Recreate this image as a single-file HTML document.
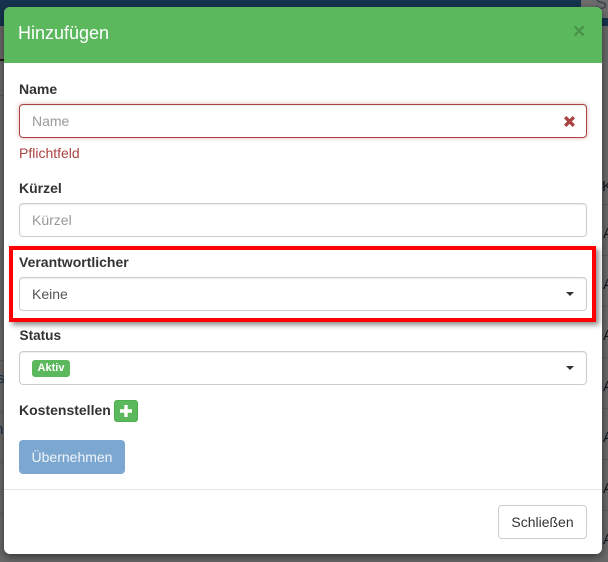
<!DOCTYPE html>
<html lang="de">
<head>
<meta charset="utf-8">
<title>Hinzufügen</title>
<style>
html,body{margin:0;padding:0}
body{width:608px;height:562px;overflow:hidden;position:relative;background:#6a6a6a;font-family:"Liberation Sans",sans-serif;font-size:14px;color:#333}
.a{position:absolute}
.line{position:absolute;height:1px;background:#5d5d5d}
.bgt{position:absolute;color:#10181f;font-size:15px;line-height:16px;white-space:nowrap}
.modal{position:absolute;left:4px;top:7px;width:598px;height:547px;background:#fff;border-radius:6px;box-shadow:0 3px 9px rgba(0,0,0,.5);overflow:hidden}
.head{position:absolute;left:0;top:0;width:598px;height:56px;background:#5cb85c}
.title{position:absolute;left:14px;top:15px;font-size:18px;line-height:23px;color:#fff}
.x{position:absolute;left:569px;top:14px;font-size:21px;line-height:21px;font-weight:bold;color:#000;opacity:.2}
label{position:absolute;font-weight:bold;font-size:14px;line-height:20px;color:#333;white-space:nowrap}
.in{position:absolute;left:19px;width:566px;height:32px;border:1px solid #ccc;border-radius:4px;background:#fff;line-height:32px;text-indent:12px;font-size:14px;color:#999;box-shadow:inset 0 1px 1px rgba(0,0,0,.075)}
.sel{color:#555}
.caret{position:absolute;left:566px;width:0;height:0;border-left:4px solid transparent;border-right:4px solid transparent;border-top:4px solid #333}
</style>
</head>
<body>
<div class="a" style="left:0;top:0;width:608px;height:26px;background:#16344f"></div>
<div class="a" style="left:581px;top:0;width:27px;height:18px;background:#6e6e6e"></div>
<div class="bgt" style="left:595px;top:-7px;font-size:18px;line-height:20px;color:#3c4650">Su</div>
<div class="a" style="left:0;top:26px;width:4px;height:536px;background:#6a6a6a"></div>
<div class="a" style="left:602px;top:26px;width:6px;height:536px;background:#6a6a6a"></div>
<div class="a" style="left:0;top:59px;width:4px;height:2px;background:#201a12"></div>
<div class="line" style="left:0;top:95px;width:4px"></div>
<div class="line" style="left:0;top:360px;width:4px"></div>
<div class="line" style="left:0;top:411px;width:4px"></div>
<div class="line" style="left:0;top:462px;width:4px"></div>
<div class="line" style="left:0;top:513px;width:4px"></div>
<div class="bgt" style="left:-6px;top:371px;color:#16344f">is</div>
<div class="bgt" style="left:-5px;top:422px;color:#16344f">n</div>
<div class="line" style="left:602px;top:204px;width:6px"></div>
<div class="line" style="left:602px;top:255px;width:6px"></div>
<div class="line" style="left:602px;top:306px;width:6px"></div>
<div class="line" style="left:602px;top:357px;width:6px"></div>
<div class="line" style="left:602px;top:408px;width:6px"></div>
<div class="line" style="left:602px;top:459px;width:6px"></div>
<div class="line" style="left:602px;top:510px;width:6px"></div>
<div class="bgt" style="left:602px;top:179px">K</div>
<div class="bgt" style="left:603px;top:226px">A</div>
<div class="bgt" style="left:603px;top:277px">A</div>
<div class="bgt" style="left:603px;top:328px">A</div>
<div class="bgt" style="left:603px;top:379px">A</div>
<div class="bgt" style="left:603px;top:430px">A</div>
<div class="bgt" style="left:603px;top:481px">A</div>
<div class="bgt" style="left:603px;top:532px">A</div>

<div class="modal">
  <div class="head">
    <div class="title">Hinzufügen</div>
    <div class="x">×</div>
  </div>
</div>

<label style="left:19px;top:79px">Name</label>
<div class="in" style="top:104px;border-color:#a94442;box-shadow:inset 0 1px 1px rgba(0,0,0,.075),0 0 5px rgba(169,68,66,.4)">Name</div>
<svg class="a" style="left:563px;top:115px" width="13" height="13" viewBox="0 0 13 13"><path d="M2.2 2.2L10.8 10.8M10.8 2.2L2.2 10.8" stroke="#a94442" stroke-width="3.4" fill="none"/></svg>
<div class="a" style="left:19px;top:143px;font-size:14px;line-height:20px;color:#a94442">Pflichtfeld</div>

<label style="left:19px;top:178px">Kürzel</label>
<div class="in" style="top:203px">Kürzel</div>

<label style="left:19px;top:252px">Verantwortlicher</label>
<div class="in sel" style="top:277px">Keine</div>
<div class="caret" style="top:292px"></div>

<label style="left:19.5px;top:326px;font-size:13.6px">Status</label>
<div class="in" style="top:351px"></div>
<div class="a" style="left:32px;top:360px;width:38px;height:17px;background:#5cb85c;border-radius:3px;color:#fff;font-size:11px;font-weight:bold;line-height:17px;text-align:center">Aktiv</div>
<div class="caret" style="top:366px"></div>

<label style="left:19px;top:400px">Kostenstellen</label>
<div class="a" style="left:114px;top:400px;width:22px;height:20px;background:#5cb85c;border:1px solid #4cae4c;border-radius:3px"></div>
<svg class="a" style="left:120px;top:405px" width="12" height="12" viewBox="0 0 12 12"><path d="M6 0V12M0 6H12" stroke="#fff" stroke-width="3.4" fill="none"/></svg>

<div class="a" style="left:19px;top:440px;width:106px;height:34px;background:#7ba7d0;border-radius:4px;color:#f0f5fa;font-size:14px;line-height:34px;text-align:center">Übernehmen</div>

<div class="a" style="left:4px;top:489px;width:598px;height:1px;background:#e5e5e5"></div>
<div class="a" style="left:498px;top:505px;width:87px;height:32px;border:1px solid #ccc;border-radius:4px;background:#fff;color:#333;font-size:14px;line-height:32px;text-align:center">Schließen</div>

<div class="a" style="left:9px;top:246px;width:579px;height:68px;border:4px solid #f00;box-shadow:3px 3px 5px rgba(0,0,0,.45)"></div>
</body>
</html>
